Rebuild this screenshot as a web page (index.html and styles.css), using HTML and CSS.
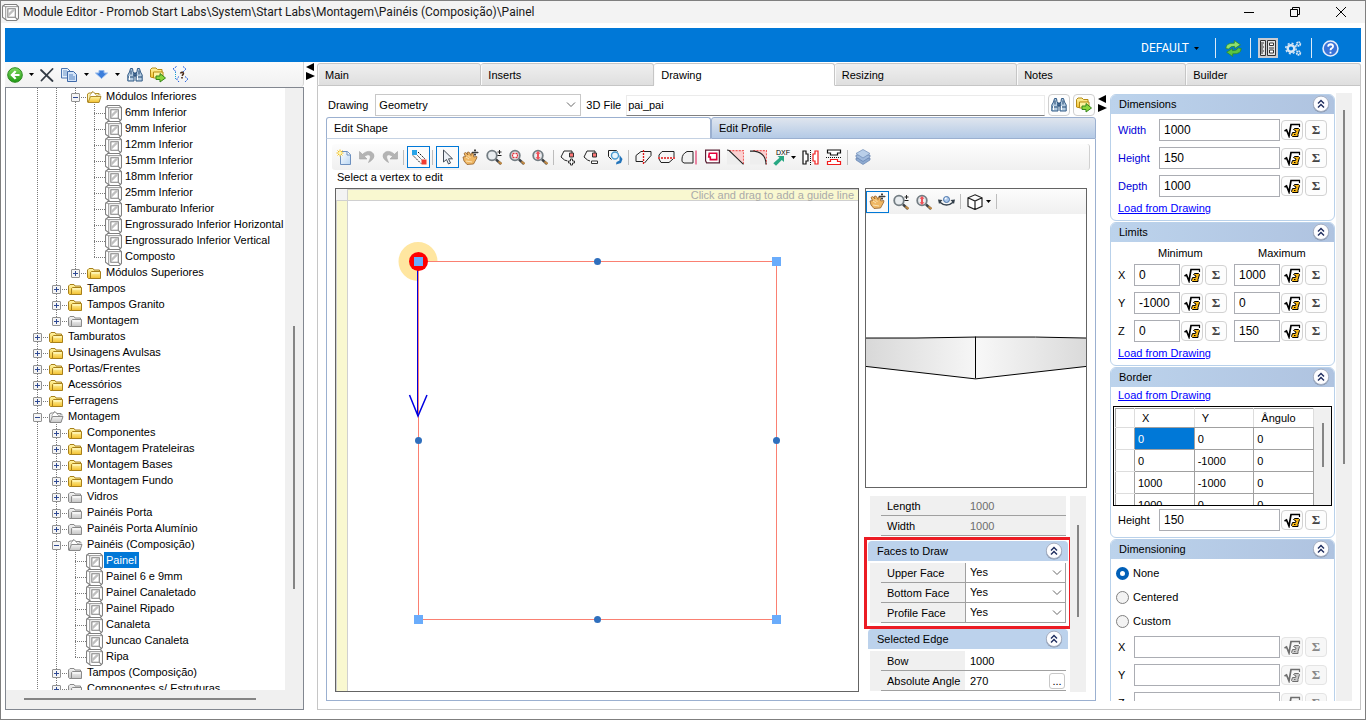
FILE: index.html
```html
<!DOCTYPE html>
<html lang="en">
<head>
<meta charset="utf-8">
<title>Module Editor</title>
<link rel="stylesheet" href="styles.css">
</head>
<body>
<svg class="sprite" aria-hidden="true">
  <defs>
    <linearGradient id="gy" x1="0" y1="0" x2="0" y2="1"><stop offset="0" stop-color="#fff6a8"/><stop offset="1" stop-color="#f3bf2c"/></linearGradient>
    <linearGradient id="gg" x1="0" y1="0" x2="0" y2="1"><stop offset="0" stop-color="#f4f4f4"/><stop offset="1" stop-color="#c4c4c4"/></linearGradient>
    <linearGradient id="gb" x1="0" y1="0" x2="1" y2="1"><stop offset="0" stop-color="#fff"/><stop offset="1" stop-color="#b9d6f3"/></linearGradient>
    <linearGradient id="ggreen" x1="0" y1="0" x2="0" y2="1"><stop offset="0" stop-color="#7ed85c"/><stop offset="1" stop-color="#1f9a14"/></linearGradient>
    <linearGradient id="face" x1="0" y1="0" x2="1" y2="0"><stop offset="0" stop-color="#d8d8d8"/><stop offset="1" stop-color="#f6f6f6"/></linearGradient>
    <linearGradient id="face2" x1="0" y1="0" x2="1" y2="0"><stop offset="0" stop-color="#f8f8f8"/><stop offset="1" stop-color="#dadada"/></linearGradient>
  </defs>
  <symbol id="cube" viewBox="0 0 16 16">
    <path d="M.5 2.5 2.5.5h11l2 2v11l-2 2h-9l-4-3z" fill="#fff" stroke="#808080"/>
    <path d="M3.500 2.500h12M3.500 2.500v12.500M.5 1.500l3 1" fill="none" stroke="#808080" stroke-width=".8"/>
    <path d="M5.500 4.500h7v8h-7z" fill="#fff" stroke="#808080"/>
    <path d="M6 12V9l4-4h2v1z" fill="#c0c0c0"/><path d="M12.500 12.500l2.500 2.500" stroke="#808080"/>
  </symbol>
  <symbol id="folder" viewBox="0 0 15 13">
    <path d="M.5 10.500V3L2 1.500h4l1 1.500h5.500v8.500H1.500z" fill="url(#gy)" stroke="#a8801a"/>
    <path d="M3.500 11.500v-6l1-1h9v7z" fill="url(#gy)" stroke="#a8801a"/><path d="M5 6h7.500" stroke="#fffbd0"/>
  </symbol>
  <symbol id="folder-g" viewBox="0 0 15 13">
    <path d="M.5 10.500V3L2 1.500h4l1 1.500h5.500v8.500H1.500z" fill="url(#gg)" stroke="#8a8a8a"/>
    <path d="M3.500 11.500v-6l1-1h9v7z" fill="url(#gg)" stroke="#8a8a8a"/><path d="M5 6h7.500" stroke="#fff"/>
  </symbol>
  <symbol id="open" viewBox="0 0 15 13">
    <path d="M.5 11V3L2 2h2l2-1.500 2 2h4V11z" fill="#fdf3b0" stroke="#b08c2a"/><path d="M3 4l3-3 4 4 3-2v5H3z" fill="#fff" stroke="#b9a36a" stroke-width=".7"/>
    <path d="M1 11.500 3.500 5.500h10.500l-2 6z" fill="url(#gy)" stroke="#b08c2a"/>
  </symbol>
  <symbol id="open-g" viewBox="0 0 15 13">
    <path d="M.5 11V3L2 2h2l2-1.500 2 2h4V11z" fill="#eee" stroke="#8a8a8a"/><path d="M3 4l3-3 4 4 3-2v5H3z" fill="#fff" stroke="#999" stroke-width=".7"/>
    <path d="M1 11.500 3.500 5.500h10.500l-2 6z" fill="url(#gg)" stroke="#8a8a8a"/>
  </symbol>
  <symbol id="caret" viewBox="0 0 5 3"><path d="M0 0h5L2.500 3z" fill="currentColor"/></symbol>
  <symbol id="back" viewBox="0 0 16 16"><circle cx="8" cy="8" r="7.300" fill="url(#ggreen)" stroke="#2c8a20"/><path d="M12.500 7H7.500l2-2.200-1.700-1.300L3.300 8l4.500 4.500 1.700-1.300-2-2.200h5z" fill="#fff"/></symbol>
  <symbol id="del" viewBox="0 0 14 14"><path d="M1 2 12.500 13M12.500 1 1.500 12.500" stroke="#333b45" stroke-width="1.800" stroke-linecap="round"/></symbol>
  <symbol id="copy" viewBox="0 0 16 14"><path d="M.5.5h6l2.500 2.500v7H.5z" fill="#e4effb" stroke="#4a74b0"/><path d="M2 3h4M2 5h5M2 7h5" stroke="#6b94c8"/><path d="M6.500 3.500h6l3 3v7h-9z" fill="#d3e4f8" stroke="#3f69a8"/><path d="M8 7h4M8 9h6M8 11h6" stroke="#5783c0"/></symbol>
  <symbol id="down" viewBox="0 0 13 9"><path d="M4 .5h5v2.500h3.500L6.500 8.500.5 3H4z" fill="#3c7edb" stroke="#8fb6ec"/></symbol>
  <symbol id="binoc" viewBox="0 0 16 14">
    <path d="M3.500.5h2l.5 3 1 2v7.500H.8V7l1.700-3zM10.500.5h2l1 3.500L15.200 7v6H9V5.500l1-2z" fill="#b4cbe0" stroke="#315a86"/>
    <path d="M1 9h5.500M9.500 9H15M4 2.500v4M12 2.500v4M7 5h2v3H7z" stroke="#1e4570" fill="#6b8eb3"/><path d="M2.500 8v4M10.500 8v4" stroke="#fff"/>
  </symbol>
  <symbol id="import" viewBox="0 0 16 15">
    <path d="M.5 9.500V2L2 .5h4L7.500 2H12v8H1.500z" fill="url(#gy)" stroke="#b58a12"/><path d="M3.500 10.500v-6h9.500v6z" fill="#fff3a0" stroke="#b58a12"/>
    <path d="M6 8.500h4V6l5.500 4.500L10 14.500V12H6z" fill="#8cd63c" stroke="#35851b"/>
  </symbol>
  <symbol id="query" viewBox="0 0 17 17"><path d="M4.500.5 1 3l3.500 3M11 .5 14 3l-3 3M7 10.500l-2.500 2.500 2.500 3M13 10.500l3 2.500-3 3" fill="none" stroke="#1756e0" stroke-dasharray="2 1"/><path d="M3.500 6v7" stroke="#1b9fd0" stroke-dasharray="1 1"/><path d="M8.500 7.500q.5-1.500 2-1.200 1.500.8.500 2.200l-1 1.200M10 11v1.500" stroke="#4a2a18" stroke-width="1.600" fill="none"/></symbol>
  <symbol id="arrows" viewBox="0 0 9 17"><path d="M8 0v8L0 4zM0 9v8l9-4z" fill="#000"/></symbol>
  <symbol id="new" viewBox="0 0 16 16"><path d="M5.500 2.500h6l3 3v10h-10v-9" fill="url(#gb)" stroke="#6d90bf"/><path d="M11 2.500v3.500h3.500" fill="#fff" stroke="#6d90bf"/><path d="M4 .5v7M.5 4h7M1.500 1.500l5 5M6.500 1.500l-5 5" stroke="#f3c01e"/><circle cx="4" cy="4" r="1.500" fill="#fff9b0"/></symbol>
  <symbol id="undo" viewBox="0 0 16 13"><path d="M.5 1v7.500H8L5.500 6C9 3 12.500 4 11 8.500L9.500 12q7-4 5-8.500C12-.5 7 .5 3.500 3.800z" fill="#b4b4b4" stroke="#a2a2a2" stroke-width=".6"/></symbol>
  <symbol id="nodes" viewBox="0 0 16 16"><path d="M1 1h5v5H1z" fill="#28a5e8"/><path d="M10.500 10.500h5v5h-5z" fill="#f23b30"/><path d="M7 3l7 7M2 6.500l8 8M6.500 6.500l4 4" stroke="#111" stroke-dasharray="1.600 1"/></symbol>
  <symbol id="cursor" viewBox="0 0 11 16"><path d="M1 1v12l3-2.500L6 15l2-1-2-4.200h4z" fill="#eef2f7" stroke="#444d58"/></symbol>
  <symbol id="hand" viewBox="0 0 17 17"><path d="M1 8l2.500-.5L2 4.500 3.500 3.500 6 6 5 3.500 7 3l2 3.500.3-2.500h1.700l.8 4 3-.5v1.500L11.500 15 5 15.500 2 12z" fill="#efb764" stroke="#93602a" stroke-width=".8"/><path d="M4 8l3 2M6 6.500l2.500 2.500M4 12l6 1" stroke="#fbe3b5"/><path d="M13 0v7M9.800 3.500H16.500M12 1.500h2M12 5.500h2M11 2.500v2M15 2.500v2" stroke="#333" stroke-width=".9"/></symbol>
  <symbol id="lens" viewBox="0 0 16 16"><circle cx="6" cy="6.500" r="4.800" fill="#e9edf0" stroke="#737d83" stroke-width="1.800"/><path d="M10 10.500l5 4.500" stroke="#3d4145" stroke-width="2.400"/><path d="M12.500 12.500l3 2.500" stroke="#c18a45" stroke-width="2"/></symbol>
  <symbol id="zpm" viewBox="0 0 16 16"><use href="#lens"/><path d="M13.500 1v4M11.500 3h4M11.500 6.500h4" stroke="#222"/></symbol>
  <symbol id="zrect" viewBox="0 0 16 16"><use href="#lens"/><path d="M3.500 4.500h5v4h-5z" fill="#fff" stroke="#e0323c" stroke-dasharray="2 1" stroke-width="1.300"/></symbol>
  <symbol id="zred" viewBox="0 0 16 16"><use href="#lens"/><path d="M6 2 8.500 4.800H7v3.500h1.500L6 11 3.500 8.300H5V4.800H3.500z" fill="#f0535a"/></symbol>
  <symbol id="vadd" viewBox="0 0 17 16"><path d="M7.500 11.500 4.500 10.500 1 7.500 4 1.500h8v2" fill="none" stroke="#222"/><path d="M9.500 3.500h4v4h-4z" fill="#f77" stroke="#333"/><path d="M10.500 9.500h2v2h2v2h-2v2h-2v-2h-2v-2h2z" fill="#fff" stroke="#333"/></symbol>
  <symbol id="vdel" viewBox="0 0 17 16"><path d="M7 11.500 4.500 10.500 1 7.500 4 1.500h8v2" fill="none" stroke="#222"/><path d="M9.500 3.500h4v4h-4z" fill="#f77" stroke="#333"/><path d="M8.500 11.500h6v2.500h-6z" fill="#fff" stroke="#333"/></symbol>
  <symbol id="swap" viewBox="0 0 16 16"><path d="M1.500 1.500h8l1 1M1.500 1.500v6l3 3" fill="none" stroke="#222"/><circle cx="8" cy="6.500" r="3.500" fill="#e8f4fc" stroke="#4b9bd0" stroke-width="1.400"/><path d="M12.500 6l3 4-1.500 4-5 1.500.5-2.500 3-1.500z" fill="#2274bb"/></symbol>
  <symbol id="cutv" viewBox="0 0 17 15"><path d="M8 1.500H6L1 5.500v6h7M9 1.500h7v4l-6.500 7.500" fill="#f5f5f5" stroke="#222"/><path d="M8.500 0v15" stroke="#e01414" stroke-width="1.300" stroke-dasharray="2 1"/></symbol>
  <symbol id="cuth" viewBox="0 0 17 15"><path d="M1 7V5l3-3.500h12V7M1 9l2 3.500h8L15 9" fill="#f5f5f5" stroke="#222"/><path d="M0 8h17" stroke="#e01414" stroke-width="1.300" stroke-dasharray="2 1"/></symbol>
  <symbol id="edge" viewBox="0 0 17 15"><path d="M12 1.500H6Q1 4 1 9v2.500l2 1.500h9z" fill="#f1f1f1" stroke="#222"/><path d="M15 .5v14" stroke="#e01450"/></symbol>
  <symbol id="inset" viewBox="0 0 15 14"><path d="M.5.5h13v12h-12l-1-2z" fill="#fff" stroke="#5a2035" stroke-width="1.200"/><path d="M4 3.500h7v6H5V7H3.500z" fill="#fff" stroke="#e2003b" stroke-width="1.500"/></symbol>
  <symbol id="chamfer" viewBox="0 0 16 15"><path d="M0 1.500h2L15.500 14H0z" fill="#eee"/><path d="M3 1h12v12z" fill="#fbd0d0"/><path d="M2 1h13.500v13" fill="none" stroke="#f26060" stroke-dasharray="2 1"/><path d="M0 .5l2 .5L15.500 14" fill="none" stroke="#222"/></symbol>
  <symbol id="fillet" viewBox="0 0 16 15"><path d="M0 1.500h4Q15 3 15 14H0z" fill="#eee"/><path d="M4 1h11v12q-1-10-11-12z" fill="#fbd0d0"/><path d="M3 1h12.500v13" fill="none" stroke="#f26060" stroke-dasharray="2 1"/><path d="M0 1.500h4Q15 3 15 14" fill="none" stroke="#222"/></symbol>
  <symbol id="exp" viewBox="0 0 11 10"><path d="M4.500 0H11v6L8.800 4 3 9.800.3 7.200 6.500 1.800z" fill="#27a883"/></symbol>
  <symbol id="mirh" viewBox="0 0 17 15"><path d="M1 1h3v3h2v7H4v3H1z" fill="#fff" stroke="#111" stroke-width="1.200"/><path d="M8.500 0v15" stroke="#111" stroke-dasharray="1 1"/><path d="M16 1h-3v3h-2v7h2v3h3z" fill="#fff" stroke="#f21d1d" stroke-width="1.200"/></symbol>
  <symbol id="mirv" viewBox="0 0 16 16"><path d="M1.500 1h13v3h-3v2h-7V4h-3z" fill="#fff" stroke="#111" stroke-width="1.200"/><path d="M0 8.500h16" stroke="#111" stroke-dasharray="1 1"/><path d="M1.500 15.500h13v-3h-3v-2h-7v2h-3z" fill="#fff" stroke="#f21d1d" stroke-width="1.200"/></symbol>
  <symbol id="layers" viewBox="0 0 16 16"><path d="M1 11l7 4.500 7-4.500V9H1z" fill="#8da9cf" stroke="#6482b0" stroke-width=".7"/><path d="M1 8l7 4.500L15 8V6H1z" fill="#9fb9dc" stroke="#6482b0" stroke-width=".7"/><path d="M1 4.500 8 .5l7 4-7 4.500z" fill="#b9cfe9" stroke="#6e8cb8" stroke-width=".7"/></symbol>
  <symbol id="orbit" viewBox="0 0 17 12"><path d="M1.500 6.500q7 6 14 0" fill="none" stroke="#333f4a" stroke-width="1.600"/><path d="M0 4l4.500.5L1 8.500zM17 4l-4.500.5L16 8.500z" fill="#333f4a"/><circle cx="8.500" cy="4" r="3" fill="#a9c6ea" stroke="#4a74a8"/><circle cx="7.700" cy="3" r="1" fill="#fff"/></symbol>
  <symbol id="box3d" viewBox="0 0 16 16"><path d="M8 .8l7 3v8.500L8 15.500l-7-3.200V3.800zM1 3.800l7 3.200 7-3.200M8 7v8.500" fill="#fff" stroke="#222" stroke-width="1.200"/></symbol>
  <symbol id="refresh" viewBox="0 0 16 16"><path d="M.8 8q0-5.500 8-5V.5L14.500 4.500 9 8V6Q5 5.500 3.500 8.500z" fill="#8fe070" stroke="#2c8a20" stroke-width=".7"/><path d="M15.200 8q0 5.500-8 5v2.500L1.500 11.500 7 8v2q4 .5 5.500-2.500z" fill="#5cc440" stroke="#2c8a20" stroke-width=".7"/></symbol>
  <symbol id="form" viewBox="0 0 16 16"><path d="M.5.5h5v15h-5zM7.500.5h8v15h-8z" fill="#e4e4e4" stroke="#333"/><path d="M1 3h3M1 5h2M1 7h3M1 9h2M1 11h3M1 13h2" stroke="#333"/><path d="M9.500 3h4v2.500h-4zM9.500 10h4v3h-4z" fill="#fff" stroke="#333"/><path d="M9 8h5" stroke="#333"/></symbol>
  <symbol id="gears" viewBox="0 0 17 16"><circle cx="6" cy="8" r="3.300" fill="none" stroke="#d8e6f4" stroke-width="2.400"/><circle cx="6" cy="8" r="5.200" fill="none" stroke="#d8e6f4" stroke-width="1.500" stroke-dasharray="2 2.080"/><circle cx="13.500" cy="3.500" r="1.800" fill="none" stroke="#d8e6f4" stroke-width="1.800" stroke-dasharray="1.500 .4"/><circle cx="13.500" cy="12.500" r="1.800" fill="none" stroke="#d8e6f4" stroke-width="1.800" stroke-dasharray="1.500 .4"/></symbol>
  <symbol id="help" viewBox="0 0 16 16"><circle cx="8" cy="8" r="7" fill="#3973d8" stroke="#e6eefb" stroke-width="1.500"/><path d="M5.700 6.200Q6 4 8.200 4q2.200.2 2.200 2 0 1.200-1.400 1.900Q8 8.500 8 9.600M8 11v1.700" fill="none" stroke="#fff" stroke-width="1.700"/></symbol>
  <symbol id="root" viewBox="0 0 17 15"><path d="M.5 8l2-1 2.500 6L7 1.500h9" fill="none" stroke="currentColor" stroke-width="1.700"/><path d="M15.500 1v3" stroke="currentColor" stroke-width="1.200"/><path d="M9.500 6.500 10.500 5.500h4l1 1-1.500 5v2H8.500L7.500 12.500l1-3h3l.5-1.500z" fill="var(--a)" stroke="currentColor"/><path d="M10 11.500h1.500" stroke="currentColor"/></symbol>
  <symbol id="chev" viewBox="0 0 18 18"><circle cx="9" cy="9.500" r="8" fill="#8090a8"/><circle cx="9" cy="8.800" r="7.700" fill="#fdfdff" stroke="#a3adc0"/><path d="M6 8.500l3-3 3 3M6 12.500l3-3 3 3" fill="none" stroke="#1d2c5e" stroke-width="1.400"/></symbol>
</svg>

<header class="titlebar">
  <svg class="i17"><use href="#cube"/></svg>
  <h1>Module Editor - Promob Start Labs\System\Start Labs\Montagem\Painéis (Composição)\Painel</h1>
  <button class="win" aria-label="Minimize"><svg width="10" height="10"><path d="M0 5.500h10" stroke="#000"/></svg></button>
  <button class="win" aria-label="Restore"><svg width="10" height="10"><path d="M.5 2.500h7v7h-7zM2.500 2V.5h7v7H8" fill="none" stroke="#000"/></svg></button>
  <button class="win" aria-label="Close"><svg width="10" height="10"><path d="M0 0l10 10M10 0L0 10" stroke="#000"/></svg></button>
</header>

<nav class="ribbon">
  <button class="default">DEFAULT <svg class="caret"><use href="#caret"/></svg></button>
  <span class="rsep"></span>
  <button class="refreshb" aria-label="Refresh"><svg class="i17"><use href="#refresh"/></svg></button>
  <span class="rsep"></span>
  <button class="pressed" aria-label="Properties"><svg class="i16"><use href="#form"/></svg></button>
  <button aria-label="Settings"><svg class="i17"><use href="#gears"/></svg></button>
  <span class="rsep"></span>
  <button aria-label="Help"><svg class="i17"><use href="#help"/></svg></button>
</nav>

<div class="work">
  <aside class="explorer">
    <div class="ltools">
      <button class="w20" aria-label="Back"><svg class="i16"><use href="#back"/></svg></button>
      <button class="w12" aria-label="Back history"><svg class="caret"><use href="#caret"/></svg></button>
      <button class="w20" aria-label="Delete"><svg class="i14"><use href="#del"/></svg></button>
      <button class="w24" aria-label="Copy"><svg class="i16"><use href="#copy"/></svg></button>
      <button class="w10" aria-label="Copy options"><svg class="caret"><use href="#caret"/></svg></button>
      <button class="w20" aria-label="Move down"><svg class="i12"><use href="#down"/></svg></button>
      <button class="w12" aria-label="Move options"><svg class="caret"><use href="#caret"/></svg></button>
      <button class="w23" aria-label="Find"><svg class="i16"><use href="#binoc"/></svg></button>
      <button class="w23" aria-label="Import"><svg class="i16"><use href="#import"/></svg></button>
      <button class="w23" aria-label="Query"><svg class="i17"><use href="#query"/></svg></button>
    </div>
    <div class="treebox">
      <div class="treeview">
        <ul class="tree">
          <li><ul><li><ul>
            <li><div class="row"><button class="tg minus" aria-label="Collapse"></button><svg><use href="#open"/></svg><span>Módulos Inferiores</span></div>
              <ul>
                <li><div class="row leaf"><svg><use href="#cube"/></svg><span>6mm Inferior</span></div></li>
                <li><div class="row leaf"><svg><use href="#cube"/></svg><span>9mm Inferior</span></div></li>
                <li><div class="row leaf"><svg><use href="#cube"/></svg><span>12mm Inferior</span></div></li>
                <li><div class="row leaf"><svg><use href="#cube"/></svg><span>15mm Inferior</span></div></li>
                <li><div class="row leaf"><svg><use href="#cube"/></svg><span>18mm Inferior</span></div></li>
                <li><div class="row leaf"><svg><use href="#cube"/></svg><span>25mm Inferior</span></div></li>
                <li><div class="row leaf"><svg><use href="#cube"/></svg><span>Tamburato Inferior</span></div></li>
                <li><div class="row leaf"><svg><use href="#cube"/></svg><span>Engrossurado Inferior Horizontal</span></div></li>
                <li><div class="row leaf"><svg><use href="#cube"/></svg><span>Engrossurado Inferior Vertical</span></div></li>
                <li><div class="row leaf"><svg><use href="#cube"/></svg><span>Composto</span></div></li>
              </ul></li>
            <li><div class="row"><button class="tg" aria-label="Expand"></button><svg><use href="#folder"/></svg><span>Módulos Superiores</span></div></li>
          </ul></li>
            <li><div class="row"><button class="tg" aria-label="Expand"></button><svg><use href="#folder"/></svg><span>Tampos</span></div></li>
            <li><div class="row"><button class="tg" aria-label="Expand"></button><svg><use href="#folder"/></svg><span>Tampos Granito</span></div></li>
            <li><div class="row"><button class="tg" aria-label="Expand"></button><svg><use href="#folder-g"/></svg><span>Montagem</span></div></li>
          </ul></li>
          <li><div class="row"><button class="tg" aria-label="Expand"></button><svg><use href="#folder"/></svg><span>Tamburatos</span></div></li>
          <li><div class="row"><button class="tg" aria-label="Expand"></button><svg><use href="#folder"/></svg><span>Usinagens Avulsas</span></div></li>
          <li><div class="row"><button class="tg" aria-label="Expand"></button><svg><use href="#folder"/></svg><span>Portas/Frentes</span></div></li>
          <li><div class="row"><button class="tg" aria-label="Expand"></button><svg><use href="#folder"/></svg><span>Acessórios</span></div></li>
          <li><div class="row"><button class="tg" aria-label="Expand"></button><svg><use href="#folder"/></svg><span>Ferragens</span></div></li>
          <li class="more"><div class="row"><button class="tg minus" aria-label="Collapse"></button><svg><use href="#open-g"/></svg><span>Montagem</span></div>
            <ul>
              <li><div class="row"><button class="tg" aria-label="Expand"></button><svg><use href="#folder"/></svg><span>Componentes</span></div></li>
              <li><div class="row"><button class="tg" aria-label="Expand"></button><svg><use href="#folder"/></svg><span>Montagem Prateleiras</span></div></li>
              <li><div class="row"><button class="tg" aria-label="Expand"></button><svg><use href="#folder"/></svg><span>Montagem Bases</span></div></li>
              <li><div class="row"><button class="tg" aria-label="Expand"></button><svg><use href="#folder"/></svg><span>Montagem Fundo</span></div></li>
              <li><div class="row"><button class="tg" aria-label="Expand"></button><svg><use href="#folder-g"/></svg><span>Vidros</span></div></li>
              <li><div class="row"><button class="tg" aria-label="Expand"></button><svg><use href="#folder-g"/></svg><span>Painéis Porta</span></div></li>
              <li><div class="row"><button class="tg" aria-label="Expand"></button><svg><use href="#folder-g"/></svg><span>Painéis Porta Alumínio</span></div></li>
              <li><div class="row"><button class="tg minus" aria-label="Collapse"></button><svg><use href="#open-g"/></svg><span>Painéis (Composição)</span></div>
                <ul>
                  <li><div class="row leaf sel"><svg><use href="#cube"/></svg><span>Painel</span></div></li>
                  <li><div class="row leaf"><svg><use href="#cube"/></svg><span>Painel 6 e 9mm</span></div></li>
                  <li><div class="row leaf"><svg><use href="#cube"/></svg><span>Painel Canaletado</span></div></li>
                  <li><div class="row leaf"><svg><use href="#cube"/></svg><span>Painel Ripado</span></div></li>
                  <li><div class="row leaf"><svg><use href="#cube"/></svg><span>Canaleta</span></div></li>
                  <li><div class="row leaf"><svg><use href="#cube"/></svg><span>Juncao Canaleta</span></div></li>
                  <li><div class="row leaf"><svg><use href="#cube"/></svg><span>Ripa</span></div></li>
                </ul></li>
              <li><div class="row"><button class="tg" aria-label="Expand"></button><svg><use href="#folder-g"/></svg><span>Tampos (Composição)</span></div></li>
              <li class="more"><div class="row"><button class="tg" aria-label="Expand"></button><svg><use href="#folder-g"/></svg><span>Componentes s/ Estruturas</span></div></li>
            </ul></li>
        </ul>
      </div>
      <div class="vbar"><span class="thumb tree-thumb"></span></div>
      <div class="hbar"><span class="hthumb"></span></div>
    </div>
  </aside>
  <div class="splitter"><svg class="arrows"><use href="#arrows"/></svg></div>

  <main class="editor">
    <div class="tabs" role="tablist">
      <button class="tab t1" role="tab">Main</button>
      <button class="tab t2" role="tab">Inserts</button>
      <button class="tab t3 active" role="tab" aria-selected="true">Drawing</button>
      <button class="tab t4" role="tab">Resizing</button>
      <button class="tab t5" role="tab">Notes</button>
      <button class="tab t6" role="tab">Builder</button>
    </div>
    <div class="page">
      <section class="drawing">
        <div class="form">
          <label for="geo">Drawing</label>
          <select id="geo" class="combo"><option>Geometry</option></select>
          <label for="file3d">3D File</label>
          <input id="file3d" class="filebox" value="pai_pai">
          <button class="sq" aria-label="Find file"><svg class="i16"><use href="#binoc"/></svg></button>
          <button class="sq" aria-label="Open file"><svg class="i16"><use href="#import"/></svg></button>
        </div>
        <div class="subtabs" role="tablist">
          <button class="subtab on" role="tab" aria-selected="true">Edit Shape</button>
          <button class="subtab" role="tab">Edit Profile</button>
        </div>
        <div class="shape">
          <div class="tools">
            <button aria-label="New"><svg class="i16"><use href="#new"/></svg></button>
            <button aria-label="Undo"><svg class="i16"><use href="#undo"/></svg></button>
            <button aria-label="Redo"><svg class="i16 flip"><use href="#undo"/></svg></button>
            <span class="sep"></span>
            <button class="boxed" aria-label="Edit nodes"><svg class="i16"><use href="#nodes"/></svg></button>
            <span class="sep"></span>
            <button class="boxed" aria-label="Select"><svg class="i16"><use href="#cursor"/></svg></button>
            <button aria-label="Pan"><svg class="i17"><use href="#hand"/></svg></button>
            <button aria-label="Zoom"><svg class="i16"><use href="#zpm"/></svg></button>
            <button aria-label="Zoom window"><svg class="i16"><use href="#zrect"/></svg></button>
            <button aria-label="Zoom extents"><svg class="i16"><use href="#zred"/></svg></button>
            <span class="sep"></span>
            <button aria-label="Add vertex"><svg class="i17"><use href="#vadd"/></svg></button>
            <button aria-label="Remove vertex"><svg class="i17"><use href="#vdel"/></svg></button>
            <button aria-label="Swap"><svg class="i16"><use href="#swap"/></svg></button>
            <span class="sep"></span>
            <button aria-label="Cut vertically"><svg class="i17"><use href="#cutv"/></svg></button>
            <button aria-label="Cut horizontally"><svg class="i17"><use href="#cuth"/></svg></button>
            <button aria-label="Edge"><svg class="i17"><use href="#edge"/></svg></button>
            <button aria-label="Offset"><svg class="i16"><use href="#inset"/></svg></button>
            <button aria-label="Chamfer"><svg class="i17"><use href="#chamfer"/></svg></button>
            <button aria-label="Fillet"><svg class="i17"><use href="#fillet"/></svg></button>
            <button class="dxf" aria-label="Export DXF"><span class="dxficon"><span>DXF</span><svg><use href="#exp"/></svg></span><svg class="caret"><use href="#caret"/></svg></button>
            <button aria-label="Mirror horizontally"><svg class="i17"><use href="#mirh"/></svg></button>
            <button aria-label="Mirror vertically"><svg class="i16"><use href="#mirv"/></svg></button>
            <span class="sep"></span>
            <button aria-label="Layers"><svg class="i16"><use href="#layers"/></svg></button>
          </div>
          <p class="hint">Select a vertex to edit</p>
          <div class="stage">
            <div class="canvas">
              <span class="corner"></span>
              <span class="rule top">Click and drag to add a guide line</span>
              <span class="rule left"></span>
              <svg class="plan">
                <path d="M70 60.500V80A19.500 19.500 0 1 1 89.500 60.500z" fill="#ffe6a0"/>
                <path d="M70.500 60.500h358v358h-358z" fill="none" stroke="#fa8072"/>
                <path d="M69.500 61v154" stroke="#0000e0"/>
                <path d="M61.500 194l8.500 21 9-21" fill="none" stroke="#0000e0" stroke-width="1.500"/>
                <circle cx="70.500" cy="60.500" r="9.500" fill="#f00"/>
                <path d="M66 56h9v9h-9zM424 56h9v9h-9zM66 414h9v9h-9zM424 414h9v9h-9z" fill="#6aacfb"/>
                <g fill="#2f6fbd"><circle cx="249.500" cy="60.500" r="3.500"/><circle cx="249.500" cy="418.500" r="3.500"/><circle cx="70.500" cy="239.500" r="3.500"/><circle cx="428.500" cy="239.500" r="3.500"/></g>
              </svg>
            </div>
            <div class="side">
              <div class="preview">
                <div class="ptools">
                  <button class="boxed" aria-label="Pan"><svg class="i17"><use href="#hand"/></svg></button>
                  <button aria-label="Zoom"><svg class="i16"><use href="#zpm"/></svg></button>
                  <button aria-label="Zoom extents"><svg class="i16"><use href="#zred"/></svg></button>
                  <button aria-label="Orbit"><svg class="i17"><use href="#orbit"/></svg></button>
                  <span class="sep"></span>
                  <button class="dxf" aria-label="View"><svg class="i16"><use href="#box3d"/></svg><svg class="caret"><use href="#caret"/></svg></button>
                  <span class="sep"></span>
                </div>
                <svg class="solid" viewBox="0 0 220 274" preserveAspectRatio="none">
                  <path d="M0 124.500l109.500-1v42L0 153z" fill="url(#face)"/><path d="M109.500 123.500l110.500 1V153l-110.500 12.500z" fill="url(#face2)"/>
                  <path d="M0 124.500h50l59.500-1h60l50.500 1M0 153l109.500 12.500L220 153M109.500 123v42" fill="none" stroke="#000"/>
                </svg>
              </div>
              <div class="props">
                <div class="plist">
                  <div class="grid ro"><label for="len">Length</label><input id="len" value="1000" disabled></div>
                  <div class="grid ro"><label for="wid">Width</label><input id="wid" value="1000" disabled></div>
                  <section class="faces">
                    <h2 class="phead">Faces to Draw<button aria-label="Collapse"><svg><use href="#chev"/></svg></button></h2>
                    <div class="grid"><label for="uf">Upper Face</label><select id="uf"><option>Yes</option></select></div>
                    <div class="grid"><label for="bf">Bottom Face</label><select id="bf"><option>Yes</option></select></div>
                    <div class="grid"><label for="pf">Profile Face</label><select id="pf"><option>Yes</option></select></div>
                  </section>
                  <section>
                    <h2 class="phead">Selected Edge<button aria-label="Collapse"><svg><use href="#chev"/></svg></button></h2>
                    <div class="grid"><label for="bow">Bow</label><input id="bow" value="1000"></div>
                    <div class="grid"><label for="ang">Absolute Angle</label><input id="ang" value="270"><span class="dotcell"><button class="dots" aria-label="More">...</button></span></div>
                  </section>
                </div>
                <div class="vbar"><span class="thumb prop-thumb"></span></div>
              </div>
            </div>
          </div>
        </div>
      </section>
      <div class="splitter2"><svg class="arrows"><use href="#arrows"/></svg></div>
      <aside class="inspector">
        <div class="cards">
          <section class="card">
            <h2>Dimensions<button aria-label="Collapse"><svg><use href="#chev"/></svg></button></h2>
            <div class="body">
              <div class="wide blue"><label for="dw">Width</label><input id="dw" value="1000"><button class="fx" aria-label="Formula"><svg><use href="#root"/></svg></button><button class="fx">Σ</button></div>
              <div class="wide blue"><label for="dh">Height</label><input id="dh" value="150"><button class="fx" aria-label="Formula"><svg><use href="#root"/></svg></button><button class="fx">Σ</button></div>
              <div class="wide blue"><label for="dd">Depth</label><input id="dd" value="1000"><button class="fx" aria-label="Formula"><svg><use href="#root"/></svg></button><button class="fx">Σ</button></div>
              <a href="#">Load from Drawing</a>
            </div>
          </section>
          <section class="card">
            <h2>Limits<button aria-label="Collapse"><svg><use href="#chev"/></svg></button></h2>
            <div class="body">
              <div class="minmax"><span>Minimum</span><span>Maximum</span></div>
              <div class="pair"><label for="x1">X</label><input id="x1" value="0"><button class="fx" aria-label="Formula"><svg><use href="#root"/></svg></button><button class="fx">Σ</button><input class="mx" aria-label="X maximum" value="1000"><button class="fx" aria-label="Formula"><svg><use href="#root"/></svg></button><button class="fx">Σ</button></div>
              <div class="pair"><label for="y1">Y</label><input id="y1" value="-1000"><button class="fx" aria-label="Formula"><svg><use href="#root"/></svg></button><button class="fx">Σ</button><input class="mx" aria-label="Y maximum" value="0"><button class="fx" aria-label="Formula"><svg><use href="#root"/></svg></button><button class="fx">Σ</button></div>
              <div class="pair"><label for="z1">Z</label><input id="z1" value="0"><button class="fx" aria-label="Formula"><svg><use href="#root"/></svg></button><button class="fx">Σ</button><input class="mx" aria-label="Z maximum" value="150"><button class="fx" aria-label="Formula"><svg><use href="#root"/></svg></button><button class="fx">Σ</button></div>
              <a href="#">Load from Drawing</a>
            </div>
          </section>
          <section class="card">
            <h2>Border<button aria-label="Collapse"><svg><use href="#chev"/></svg></button></h2>
            <div class="body border">
              <a href="#">Load from Drawing</a>
              <div class="tablebox">
                <table>
                  <thead><tr><th class="rh"></th><th>X</th><th>Y</th><th>Ângulo</th></tr></thead>
                  <tbody>
                    <tr><td class="rh"></td><td class="cur">0</td><td>0</td><td>0</td></tr>
                    <tr><td class="rh"></td><td>0</td><td>-1000</td><td>0</td></tr>
                    <tr><td class="rh"></td><td>1000</td><td>-1000</td><td>0</td></tr>
                    <tr><td class="rh"></td><td>1000</td><td>0</td><td>0</td></tr>
                  </tbody>
                </table>
                <div class="vbar"><span class="thumb table-thumb"></span></div>
              </div>
              <div class="wide"><label for="bh">Height</label><input id="bh" value="150"><button class="fx" aria-label="Formula"><svg><use href="#root"/></svg></button><button class="fx">Σ</button></div>
            </div>
          </section>
          <section class="card">
            <h2>Dimensioning<button aria-label="Collapse"><svg><use href="#chev"/></svg></button></h2>
            <div class="body">
              <label class="radio"><input type="radio" name="dim" checked>None</label>
              <label class="radio"><input type="radio" name="dim">Centered</label>
              <label class="radio"><input type="radio" name="dim">Custom</label>
              <div class="long off"><label for="cx">X</label><input id="cx" disabled><button class="fx" disabled aria-label="Formula"><svg><use href="#root"/></svg></button><button class="fx" disabled>Σ</button></div>
              <div class="long off"><label for="cy">Y</label><input id="cy" disabled><button class="fx" disabled aria-label="Formula"><svg><use href="#root"/></svg></button><button class="fx" disabled>Σ</button></div>
              <div class="long off"><label for="cz">Z</label><input id="cz" disabled><button class="fx" disabled aria-label="Formula"><svg><use href="#root"/></svg></button><button class="fx" disabled>Σ</button></div>
            </div>
          </section>
        </div>
        <div class="vbar"><span class="thumb main-thumb"></span></div>
      </aside>
    </div>
  </main>
</div>
</body>
</html>
```
FILE: styles.css
```css
* { box-sizing: border-box; }
html, body { height: 100%; margin: 0; }
body {
  display: flex; flex-direction: column; overflow: hidden;
  border: 1px solid #7f7f7f; background: #fff; color: #000;
  font: 11px/16px "Liberation Sans", Arial, sans-serif;
}
button, input, select { font: inherit; color: inherit; margin: 0; border-radius: 0; }
button { display: flex; align-items: center; justify-content: center; padding: 0; border: 0; background: none; }
svg { display: block; flex: none; }
ul { list-style: none; margin: 0; padding: 0; }
h1, h2, p { margin: 0; font-weight: normal; font-size: inherit; }
a { color: #0000ff; }
.sprite { position: absolute; width: 0; height: 0; }
.i17 { width: 17px; height: 17px; }
.i16 { width: 16px; height: 16px; }
.i14 { width: 14px; height: 14px; }
.i12 { width: 13px; height: 11px; }
.flip { transform: scaleX(-1); }
.caret { width: 5px; height: 3px; }

/* window frame */
.titlebar { display: flex; align-items: center; height: 22px; flex: none; background: #f3f3f3; padding: 0 3px 0 1px; gap: 4px; }
.titlebar h1 { flex: 1; font: 12px/20px Roboto, "Noto Sans", sans-serif; white-space: nowrap; overflow: hidden; color: #1a1a1a; }
.win { width: 42px; height: 20px; }
.ribbon { display: flex; align-items: center; justify-content: flex-end; flex: none; height: 34px; margin: 5px 4px 0; padding: 6px 19px 0 0; background: #0078d7; color: #fff; }
.ribbon button { width: 24px; height: 20px; }
.ribbon .default { width: 58px; gap: 5px; margin-right: 10px; font: 12px/20px Roboto, "Noto Sans", sans-serif; }
.ribbon .default svg { color: #000; }
.ribbon .refreshb { width: 22px; }
.ribbon .pressed { width: 20px; margin: 0 3px 0 1px; background: #c9ccd2; }
.rsep { width: 1px; height: 20px; background: #dceaf7; margin: 0 6px; }
.work { flex: 1; min-height: 0; display: flex; padding: 0 4px 9px; }

/* explorer */
.explorer { width: 299px; flex: none; display: flex; flex-direction: column; }
.ltools { display: flex; height: 25px; flex: none; background: linear-gradient(#fbfbfb, #f1f1f1); border-right: 1px solid #d5d5d5; border-radius: 0 0 4px 0; }
.w10 { width: 10px; } .w12 { width: 12px; } .w20 { width: 20px; } .w23 { width: 23px; } .w24 { width: 24px; }
.treebox { flex: 1; min-height: 0; display: grid; grid-template: 1fr 18px / 1fr 17px; border: 1px solid #828790; background: #f0f0f0; padding: 0 1px 1px; }
.treeview { overflow: hidden; background: #fff; margin-left: -1px; }
.hbar { grid-column: 1 / 3; }
.hthumb { display: block; height: 2px; width: 232px; margin: 8px 0 0 17px; background: #858585; }
.vbar { width: 17px; background: #f0f0f0; }
.thumb { display: block; width: 2px; margin: 0 auto; background: #858585; }
.tree-thumb { height: 263px; margin-top: 238px; }
.tree { padding-left: 27px; }
.tree ul { margin-left: 19px; }
.tree li { background: repeating-linear-gradient(#7a7a7a 0 1px, transparent 1px 2px) 4px 0 / 1px 100% no-repeat; }
.tree li:last-child { background-size: 1px 9px; }
.tree li.more { background-size: 1px 100%; }
.row { display: flex; height: 16px; align-items: center; white-space: nowrap; }
.row > svg { width: 15px; height: 13px; margin: 3px 2px 0 7px; }
.row.leaf > svg { width: 17px; height: 17px; margin: 2px -1px -1px 0; }
.row > svg, .tg { flex: none; }
.row span { padding: 0 2px; line-height: 16px; height: 16px; }
.row { background: repeating-linear-gradient(90deg, #7a7a7a 0 1px, transparent 1px 2px) 4px 9px / 12px 1px no-repeat; }
.row.leaf { padding-left: 15px; }
.leaf span { margin-left: 2px; }
.sel span { background: #0078d7; color: #fff; }
.tg { width: 9px; height: 9px; margin-top: 3px; border: 1px solid #919191; border-radius: 1px; background: linear-gradient(#2f4a94, #2f4a94) center / 5px 1px no-repeat, linear-gradient(#2f4a94, #2f4a94) center / 1px 5px no-repeat, #f5f5f5; }
.tg.minus { background: linear-gradient(#2f4a94, #2f4a94) center / 5px 1px no-repeat, #f5f5f5; }
.splitter { width: 13px; flex: none; padding: 1px 0 0 2px; }
.arrows { width: 9px; height: 17px; }

/* tabs */
.editor { flex: 1; min-width: 0; display: flex; flex-direction: column; }
.tabs { display: flex; height: 24px; flex: none; padding-top: 1px; }
.tab { justify-content: flex-start; padding-left: 7px; min-width: 0; border: 1px solid #c6c6c6; border-left-width: 0; border-radius: 3px 3px 0 0; background: linear-gradient(#efefef, #dfdfdf); box-shadow: inset 1px 0 #fafafa; }
.tab.active { background: #fff; border-bottom-color: #fff; }
.t1 { flex: 163 1 0; border-left-width: 1px; } .t2 { flex: 173 1 0; } .t3 { flex: 181 1 0; }
.t4 { flex: 183 1 0; } .t5 { flex: 169 1 0; } .t6 { flex: 175 1 0; }
.page { flex: 1; min-height: 0; display: flex; border: 1px solid #c6c6c6; border-top: 0; padding: 7px 8px 8px; }
.drawing { flex: 1; min-width: 0; display: flex; flex-direction: column; }
.form { display: flex; align-items: center; gap: 3px; height: 24px; flex: none; padding: 1px 1px 1px 2px; }
.form label { margin-right: 4px; }
.form .combo + label { margin: 0 2px; }
.combo { width: 206px; height: 22px; }
select { appearance: none; border: 1px solid #c8c8c8; padding: 0 0 0 3px; background: #fff url("data:image/svg+xml,%3Csvg xmlns='http://www.w3.org/2000/svg' width='10' height='6'%3E%3Cpath d='M1 .5l4 4 4-4' fill='none' stroke='%23666'/%3E%3C/svg%3E") right 4px center no-repeat; }
.filebox { flex: 1; min-width: 0; height: 21px; border: 1px solid #ebebeb; border-bottom-color: #808080; padding: 0 1px; }
.sq { width: 22px; height: 22px; border: 1px solid #cfcfcf; border-radius: 4px; background: #fdfdfd; }
.subtabs { display: flex; height: 22px; flex: none; }
.subtab { flex: 1; justify-content: flex-start; padding-left: 7px; border: 1px solid #9bb0d0; border-radius: 3px 3px 0 0; background: linear-gradient(#dfe5ee, #b4cae6); }
.subtab.on { background: #fff; border-bottom-color: #c5d2e3; }
.shape { flex: 1; min-height: 0; display: flex; flex-direction: column; border: 1px solid #9bb0d0; border-top: 0; padding: 5px 8px 8px; }
.tools, .ptools { display: flex; align-items: center; }
.tools { height: 26px; flex: none; margin: 0 -3px; background: linear-gradient(#fdfdfd, #f0f0f0); border-right: 1px solid #d0d0d0; border-radius: 3px; }
.tools button, .ptools button { width: 23px; height: 22px; flex: none; }
.tools .dxf { width: 29px; gap: 1px; }
.boxed.boxed { border: 1px solid #0078d7; background: #fbfbfb; }
.sep { width: 1px; height: 15px; background: #bdbdbd; margin: 0 3px 0 2px; flex: none; }
.dxficon { display: block; width: 17px; height: 17px; font: 7px/7px "Liberation Sans", sans-serif; text-align: right; }
.dxficon svg { width: 11px; height: 10px; }
.hint { height: 15px; line-height: 15px; padding-left: 2px; flex: none; }
.stage { flex: 1; min-height: 0; display: flex; gap: 6px; margin-top: 3px; }

/* plan canvas */
.canvas { flex: 1; min-width: 0; display: grid; grid-template: 12px 1fr / 12px 1fr; border: 1px solid #646464; overflow: hidden; }
.corner { background: #f3f3f3; border-right: 1px solid #d0d0d0; border-bottom: 1px solid #d0d0d0; }
.rule { background: #f9f8d0; color: #aaa; }
.rule.top { border-bottom: 1px solid #d0d0d0; border-top: 1px solid #d0d0d0; line-height: 10px; text-align: right; padding-right: 4px; white-space: nowrap; }
.rule.left { border-right: 1px solid #d0d0d0; border-left: 1px solid #d0d0d0; }
.plan { width: 100%; height: 100%; }
.side { width: 222px; flex: none; display: flex; flex-direction: column; gap: 8px; }
.preview { flex: 1; min-height: 0; display: flex; flex-direction: column; border: 1px solid #646464; }
.ptools { height: 25px; flex: none; background: linear-gradient(#fcfcfc, #f0f0f0); }
.ptools .dxf { width: 30px; gap: 3px; }
.solid { width: 100%; flex: 1; min-height: 0; }

/* property grid */
.props { height: 196px; flex: none; display: flex; padding: 0 1px 0 4px; }
.plist { flex: 1; min-width: 0; margin-right: 2px; padding-left: 1px; }
.props > .vbar { width: 16px; }
.prop-thumb { height: 92px; margin-top: 29px; }
.grid { display: flex; height: 20px; margin-right: 2px; background: #f0f0f0; padding-left: 11px; }
.grid label { width: 84px; flex: none; padding: 2px 0 0 6px; border-bottom: 1px solid #a0a0a0; white-space: nowrap; }
.grid input, .grid select { flex: 1; min-width: 0; border: 0; border-bottom: 1px solid #a0a0a0; padding: 0 0 0 5px; }
.grid select { border: 1px solid #a0a0a0; border-top: 0; padding: 0 0 1px 4px; background-position: right 3px center; }
.ro input { background: #f0f0f0; color: #6d6d6d; }
.phead { display: flex; align-items: center; justify-content: space-between; height: 20px; margin: 0 0 2px -2px; padding: 0 5px 0 9px; background: #bcd2ec; border-radius: 4px 4px 0 0; line-height: 20px; }
.phead svg, .card h2 svg { width: 18px; height: 18px; }
.faces { margin: 5px 0 4px -2px; padding: 0 0 2px 2px; outline: 3px solid #ec1c24; outline-offset: 1px; }
.dotcell { display: flex; align-items: center; padding-right: 1px; background: #fff; border-bottom: 1px solid #a0a0a0; }
.dots { width: 16px; height: 16px; border: 1px solid #c8c8c8; border-radius: 3px; background: #fff; }

/* inspector */
.splitter2 { width: 14px; flex: none; padding: 2px 0 0 2px; }
.inspector { width: 242px; flex: none; display: flex; }
.cards { flex: 1; overflow: hidden; padding-top: 1px; }
.inspector > .vbar { width: 16px; }
.main-thumb { height: 354px; margin-top: 17px; }
.card { width: 225px; border: 1px solid #b9d1ea; border-radius: 6px; margin-bottom: 1px; overflow: hidden; }
.card h2 { display: flex; align-items: center; justify-content: space-between; height: 20px; padding: 0 5px 0 9px; margin: -1px -1px 0; background: linear-gradient(90deg, #bcd3ec, #afc3e0); line-height: 20px; }
.body { padding: 5px 7px 4px; display: flex; flex-direction: column; gap: 6px; }
.body a { line-height: 16px; margin-top: -3px; }
.wide, .pair, .long { display: flex; align-items: center; height: 22px; }
.blue label { color: #0000d8; }
.wide label { width: 41px; }
.pair label, .long label { width: 16px; }
.body input:not([type]) { flex: 1; min-width: 0; height: 22px; font-size: 12px; border: 1px solid #abadb3; padding: 0 4px; background: #fff; }
.body .pair .mx { margin-left: 7px; }
.fx { width: 22px; height: 20px; flex: none; margin-left: 1px; border: 1px solid #d2d2d2; border-radius: 4px; background: #fdfdfd; font: bold 13px/18px "Liberation Serif", serif; color: #444; --a: #f7b718; }
.fx + .fx { margin-left: 2px; }
.fx svg { width: 17px; height: 15px; color: #000; }
.off .fx { --a: #c9c9c9; color: #888; background: #f7f7f7; border-color: #e4e4e4; }
.off .fx svg { color: #6e6e6e; }
.minmax { display: flex; line-height: 12px; margin-bottom: -1px; }
.minmax span { width: 100px; padding-left: 40px; white-space: nowrap; }
.border { padding: 3px 2px 6px; gap: 3px; }
.border a { margin: -3px 0 0 5px; }
.border .wide { padding: 0 5px; }
.tablebox { display: flex; height: 100px; overflow: hidden; border: 1px solid #000; background: #fff; padding: 1px 0 0 1px; }
.tablebox table { flex: 1; width: 0; height: max-content; border-collapse: collapse; table-layout: fixed; border-top: 1px solid #a0a0a0; border-left: 1px solid #a0a0a0; }
th, td { height: 22px; padding: 0 0 0 3px; border: 1px solid #a0a0a0; text-align: left; font-weight: normal; line-height: 16px; }
th { height: 19px; padding-left: 7px; border-right-color: #ddd; }
.rh { width: 19px; border-bottom-color: #ddd; }
.cur { background: #0078d7; color: #fff; }
.table-thumb { height: 44px; margin-top: 15px; }
.radio { display: flex; align-items: center; gap: 4px; height: 16px; margin: 1px 0 1px -2px; }
.radio input { appearance: none; width: 13px; height: 13px; border: 1px solid #808080; border-radius: 50%; background: #f3f3f3; margin: 0; }
.radio input:checked { border: 4px solid #005fb8; background: #fff; }
```
